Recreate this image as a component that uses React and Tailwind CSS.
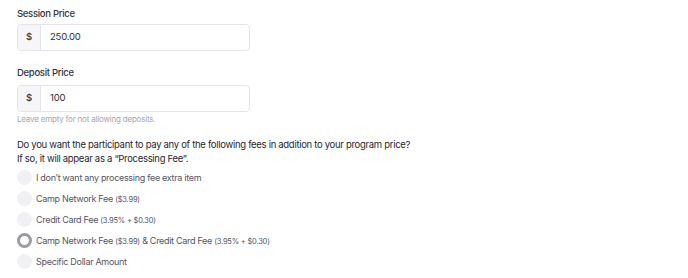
import React from 'react';

const font = { fontFamily: 'Inter, "Noto Sans", sans-serif' };

function PriceInput({ value }) {
    return (
        <div className="flex h-[27px] w-[233px] overflow-hidden rounded-[4px] border border-[#e4e4ea] bg-white">
            <div className="flex w-[23px] items-center justify-center border-r border-[#e4e4ea] bg-[#f6f6f9] text-[9.5px] font-semibold text-[#3f3f4a]">
                $
            </div>
            <div className="flex items-center pl-[9px] text-[9.5px] tracking-[-0.2px] text-[#2d2d38]">{value}</div>
        </div>
    );
}

function Radio({ checked, children }) {
    return (
        <div className="flex h-[21px] items-center gap-[4px]">
            {checked ? (
                <span className="box-border h-[15px] w-[15px] rounded-full border-[3.5px] border-[#9b9aa6] bg-white" />
            ) : (
                <span className="h-[15px] w-[15px] rounded-full bg-[#f1f1f5]" />
            )}
            <span className="text-[9px] tracking-[-0.3px] text-[#55555f]">{children}</span>
        </div>
    );
}

const Small = ({ children }) => <span className="text-[7.5px] tracking-[-0.2px]">{children}</span>;

export default function App() {
    return (
        <div className="h-[278px] w-[688px] bg-white pl-[17px] pt-[7px]" style={font}>
            <div className="mb-[3px] text-[9.5px] font-medium leading-[14px] tracking-[-0.3px] text-[#33333d]">Session Price</div>
            <PriceInput value="250.00" />

            <div className="mt-[15px] mb-[5px] text-[9.5px] font-medium leading-[14px] tracking-[-0.3px] text-[#33333d]">Deposit Price</div>
            <PriceInput value="100" />
            <div className="mt-[1px] text-[8px] leading-[12px] tracking-[-0.2px] text-[#a5a5ae]">Leave empty for not allowing deposits.</div>

            <div className="mt-[13px] text-[9.5px] leading-[14px] tracking-[-0.3px] text-[#27272f]">
                <div>Do you want the participant to pay any of the following fees in addition to your program price?</div>
                <div>If so, it will appear as a “Processing Fee”.</div>
            </div>

            <div className="mt-[1px] flex flex-col">
                <Radio>I don’t want any processing fee extra item</Radio>
                <Radio>Camp Network Fee <Small>($3.99)</Small></Radio>
                <Radio>Credit Card Fee <Small>(3.95% + $0.30)</Small></Radio>
                <Radio checked>
                    Camp Network Fee <Small>($3.99)</Small> &amp; Credit Card Fee <Small>(3.95% + $0.30)</Small>
                </Radio>
                <Radio>Specific Dollar Amount</Radio>
            </div>
        </div>
    );
}
